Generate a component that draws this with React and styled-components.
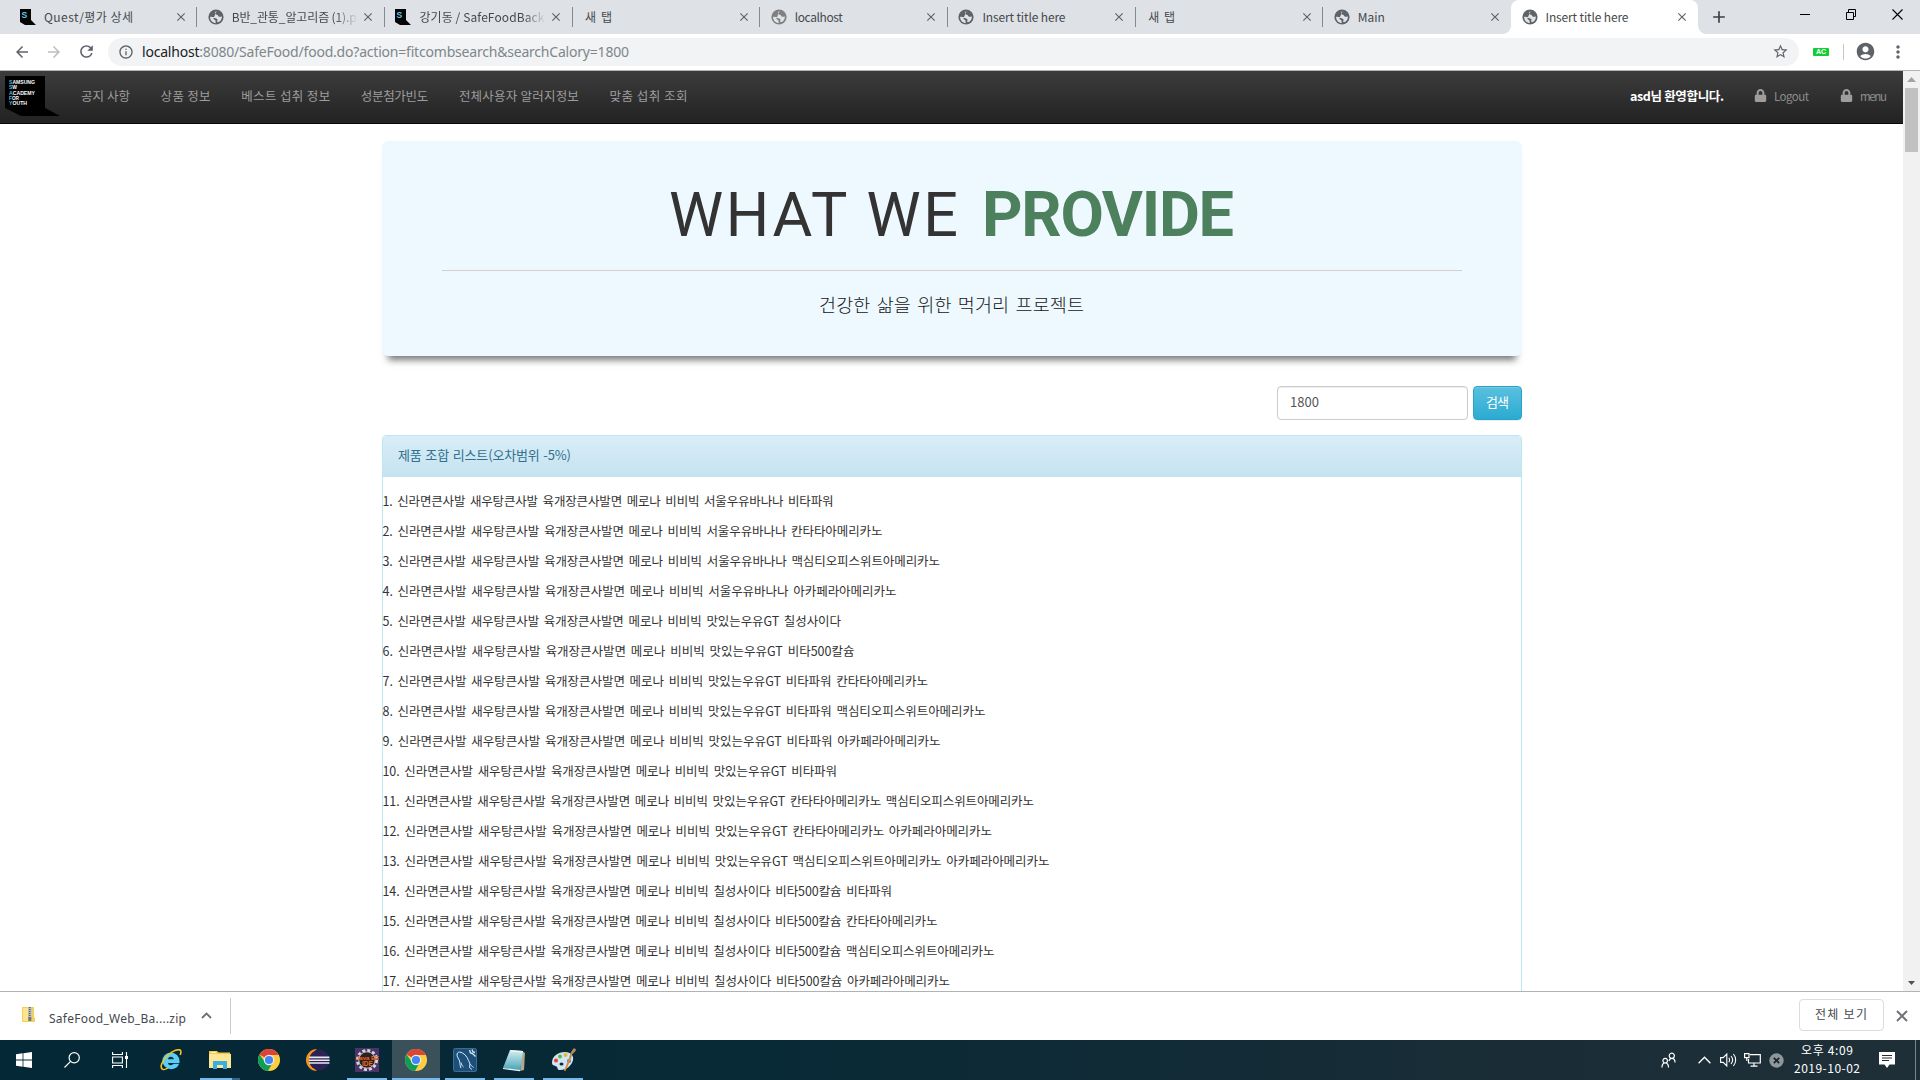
import React, { useLayoutEffect, useRef, useState } from "react";
import styled, { createGlobalStyle, css } from "styled-components";
import {
  MdArrowBack, MdArrowForward, MdRefresh, MdInfoOutline, MdStarBorder,
  MdAccountCircle, MdMoreVert, MdAdd, MdClose,
} from "react-icons/md";
import { FaLock } from "react-icons/fa";

const GlobalStyle = createGlobalStyle`
  * { box-sizing: border-box; }
  body {
    margin: 0;
    overflow: hidden;
    background: #fff;
    font-family: "Noto Sans CJK KR", sans-serif;
    color: #333;
  }
  svg { display: block; flex: none; }
`;

/* ---------- text set to a fixed measure ---------- */

const Measure = styled.span`
  display: block;
  flex: none;
  width: ${(p) => p.$w}px;
  white-space: pre;
`;

function Fit({ w, children, ...rest }) {
  const ref = useRef(null);
  const [spacing, setSpacing] = useState(0);
  useLayoutEffect(() => {
    const el = ref.current;
    const previous = el.style.letterSpacing;
    el.style.letterSpacing = "0px";
    const natural = el.getBoundingClientRect().width;
    el.style.letterSpacing = previous;
    setSpacing((w - natural) / Math.max(1, el.textContent.length - 1));
  }, [w, children]);
  return (
    <Measure $w={w} {...rest}>
      <span ref={ref} style={{ letterSpacing: `${spacing}px` }}>{children}</span>
    </Measure>
  );
}

/* ---------- window ---------- */

const Screen = styled.div`
  width: 1920px;
  height: 1080px;
  display: flex;
  flex-direction: column;
  overflow: hidden;
`;

const TabStrip = styled.div`
  flex: none;
  height: 34px;
  background: #dee1e6;
  padding-left: 9px;
  display: flex;
  align-items: center;
`;

const TabBox = styled.div`
  flex: none;
  width: 187.7px;
  height: 34px;
  padding: 0 9px 0 11px;
  display: flex;
  align-items: center;
  font-size: 12px;
  line-height: 18px;
  color: #45494d;
  position: relative;
  ${(p) => p.$active ? css`
    background: #fff;
    border-radius: 8px 8px 0 0;
    &::before, &::after {
      content: "";
      position: absolute;
      bottom: 0;
      width: 8px;
      height: 8px;
    }
    &::before { left: -8px; background: radial-gradient(circle at 0 0, #dee1e6 7.5px, #fff 8px); }
    &::after { right: -8px; background: radial-gradient(circle at 100% 0, #dee1e6 7.5px, #fff 8px); }
  ` : css`
    &::after {
      content: "";
      position: absolute;
      right: -0.5px;
      top: 7px;
      height: 20px;
      width: 1px;
      background: ${p.$last ? "transparent" : "#85888c"};
    }
  `}
`;

const TabTitle = styled.div`
  flex: 1;
  min-width: 0;
  padding-bottom: 1px;
  margin-left: ${(p) => (p.$icon ? 8 : 2)}px;
  margin-right: ${(p) => (p.$fade ? 3 : 6)}px;
  ${(p) => p.$fade && css`mask-image: linear-gradient(90deg, #000 82%, transparent);`}
`;

const NewTab = styled.div`
  margin-left: 11px;
  color: #3c4043;
`;

const WindowButtons = styled.div`
  flex: 1;
  display: flex;
  justify-content: flex-end;
  gap: 36px;
  padding: 0 17.5px 5px 0;
`;

const Toolbar = styled.div`
  flex: none;
  height: 37px;
  padding: 0 11px 1px 13px;
  display: flex;
  align-items: center;
  background: #fff;
  border-bottom: 1px solid #b0b4b3;
  color: #5f6368;
`;

const NavIcon = styled.div`
  width: 18px;
  margin-right: 14px;
  color: ${(p) => (p.$off ? "#bcbec0" : "#5f6368")};
`;

const Omnibox = styled.div`
  flex: none;
  width: 1691px;
  height: 28px;
  margin-left: -1px;
  padding: 0 10px;
  border-radius: 14px;
  background: #f1f3f4;
  display: flex;
  align-items: center;
  gap: 8px;
  font-family: "Noto Sans", sans-serif;
  font-size: 14px;
  line-height: 20px;
  color: #80868b;
`;

const Host = styled.span`color: #202124;`;
const Spring = styled.div`flex: 1;`;

const Badge = styled.div`
  width: 16px;
  height: 8px;
  margin-left: 14px;
  background: #12ce35;
  border-radius: 1px;
  color: #fff;
  font: bold 7px/8px "Liberation Sans", sans-serif;
  text-align: center;
`;

const ToolbarRule = styled.div`
  width: 1px;
  height: 16px;
  margin: 0 11px 0 14px;
  background: #c5c8cb;
`;

const MenuDots = styled.div`margin-left: 12px;`;

/* ---------- page ---------- */

const Viewport = styled.div`
  flex: none;
  height: 920px;
  display: flex;
  overflow: hidden;
`;

const Page = styled.div`
  width: 1903px;
  height: 920px;
  overflow: hidden;
`;

const Navbar = styled.nav`
  height: 53px;
  padding: 0 16px 3px 5px;
  display: flex;
  align-items: center;
  background: linear-gradient(#3c3c3c, #222);
  border-bottom: 1px solid #080808;
  color: #9d9d9d;
  font-size: 12.5px;
  line-height: 20px;
`;

const Brand = styled.div`
  margin: 1px 21px 0 0;
`;

const NavLinks = styled.div`
  display: flex;
  gap: 30.6px;
`;

const Welcome = styled.div`
  color: #fff;
  font-weight: 700;
  margin-right: 30px;
`;

const AccountLink = styled.div`
  display: flex;
  align-items: center;
  gap: 7px;
  margin-left: ${(p) => (p.$next ? 31 : 0)}px;
  font-size: 11.5px;
  color: #8d8d8d;
  svg { color: #9d9d9d; }
  span { padding-top: 1px; }
`;

const Container = styled.main`
  width: 1140px;
  margin: 17px 0 0 382px;
`;

const Jumbotron = styled.section`
  height: 215px;
  padding: 0 60px;
  border-radius: 6px;
  background: #edf9ff;
  box-shadow: 0 10px 7px -6px #777;
`;

const Headline = styled.h1`
  margin: 0;
  height: 129px;
  padding: 39px 0 0 227px;
  display: flex;
  gap: 24px;
  font: 400 61px/70px Roboto, sans-serif;
  color: #333;
`;

const Strong = styled.div`
  font-weight: 700;
  font-size: 63px;
  color: #4d805c;
`;

const Rule = styled.div`
  height: 1px;
  background: #d4d0d2;
`;

const Tagline = styled.p`
  margin: 0;
  padding: 18px 0 0 377px;
  font-size: 18.5px;
  font-weight: 300;
  line-height: 30px;
  word-spacing: 2px;
  color: #151515;
`;

const SearchRow = styled.div`
  margin: 30px 0 15px;
  display: flex;
  justify-content: flex-end;
  gap: 5px;
  font-size: 13px;
`;

const SearchField = styled.div`
  width: 191px;
  height: 34px;
  padding: 5px 12px;
  border: 1px solid #ccc;
  border-radius: 4px;
  box-shadow: inset 0 1px 1px rgba(0, 0, 0, 0.075);
  line-height: 19px;
  color: #555;
`;

const SearchButton = styled.div`
  width: 49px;
  height: 34px;
  padding: 5px 12px;
  border: 1px solid #28a4c9;
  border-radius: 4px;
  background: linear-gradient(#5bc0de, #2aabd2);
  box-shadow: inset 0 1px 0 rgba(255, 255, 255, 0.15), 0 1px 1px rgba(0, 0, 0, 0.075);
  line-height: 19px;
  color: #fff;
`;

const Panel = styled.section`
  height: 700px;
  border: 1px solid #bce8f1;
  border-radius: 4px;
`;

const PanelHeading = styled.div`
  height: 41px;
  padding: 9px 15px;
  background: linear-gradient(#d9edf7, #c4e3f0);
  border-radius: 3px 3px 0 0;
  font-size: 13px;
  line-height: 20px;
  word-spacing: 1px;
  color: #31708f;
`;

const Results = styled.div`
  padding-top: 14px;
  font-size: 12.5px;
  line-height: 20px;
  word-spacing: 2px;
`;

const ResultRow = styled.p`margin: 0 0 10px -0.5px;`;

const Scrollbar = styled.div`
  width: 17px;
  height: 920px;
  background: #f1f1f1;
  display: flex;
  flex-direction: column;
  align-items: center;
`;

const ScrollThumb = styled.div`
  width: 13px;
  height: 64px;
  margin-bottom: auto;
  background: #c1c1c1;
`;

/* ---------- downloads ---------- */

const DownloadBar = styled.div`
  flex: none;
  height: 49px;
  padding: 0 12px 0 21px;
  border-top: 1px solid #b0b3b5;
  display: flex;
  align-items: center;
  background: #fff;
  font-size: 12px;
  line-height: 18px;
  color: #45494d;
`;

const FileIcon = styled.div`margin: 0 14px 3px 0;`;
const FileName = styled.div`
  padding-top: 5px;
  font-family: "Noto Sans", sans-serif;
  font-size: 12px;
`;
const Chevron = styled.div`margin: 0 18px 1px 15px;`;
const BarRule = styled.div`
  width: 1px;
  height: 36px;
  background: #c8cacc;
`;
const ShowAll = styled.div`
  width: 85px;
  height: 32px;
  margin: 0 12px 2px auto;
  padding: 5px 15px;
  border: 1px solid #dadce0;
  border-radius: 4px;
`;

/* ---------- taskbar ---------- */

const Taskbar = styled.div`
  flex: none;
  height: 40px;
  display: flex;
  background: linear-gradient(90deg, #052836 0%, #082936 40%, #1a2d36 80%, #1f2f38 100%);
  color: #fff;
`;

const SystemGroup = styled.div`
  display: flex;
  margin-right: 3px;
`;

const AppGroup = styled.div`
  display: flex;
  gap: 1px;
`;

const TaskButton = styled.div`
  width: 48px;
  height: 40px;
  display: grid;
  place-items: center;
  background-color: ${(p) => (p.$active ? "#3a515c" : "transparent")};
  background-image: ${(p) => (p.$open ? p.$stacked
    ? "linear-gradient(90deg, #76b9ed 32px, #35658a 32px)"
    : "linear-gradient(#76b9ed, #76b9ed)" : "none")};
  background-repeat: no-repeat;
  background-position: center bottom;
  background-size: ${(p) => (p.$active ? 48 : 40)}px 2px;
`;

const Tray = styled.div`
  margin-left: auto;
  display: flex;
  align-items: center;
`;

const TrayIcon = styled.div`margin-right: ${(p) => p.$after}px;`;

const Clock = styled.div`
  width: 66px;
  margin-right: 19px;
  padding-bottom: 2px;
  display: flex;
  flex-direction: column;
  align-items: center;
  font-size: 12px;
  line-height: 18px;
`;

const DesktopEdge = styled.div`
  width: 1px;
  height: 40px;
  margin: 0 4px 0 20px;
  background: #7c8589;
`;

/* ---------- drawings ---------- */

const Globe = ({ tone = "#5f6368" }) => (
  <svg width="16" height="16" viewBox="0 0 16 16">
    <circle cx="8" cy="8" r="7.6" fill={tone} />
    <path d="M8.6 2.1C7 3 6.6 4.3 7.6 5.2c.8.6 2 .2 2.4 1.3.3 1 1.3 1.5 2.4 1.2l1.500-.3c.1 2.8-1.600 5-3.900 5.900-.9-.2-1-1-.6-1.800.5-1.200-.3-1.600-1.300-2C6.800 9 6.500 8 5 7.900L2.100 7.700C2 11.200 4.500 13.900 8 14c-.9-1-.3-1.600-.5-2.500C7.200 10.600 5.600 11 5.400 9.600" fill="#dfe2e6" stroke="none" />
  </svg>
);

const SsafyMark = () => (
  <svg width="16" height="17" viewBox="0 0 16 17">
    <path d="M0 0h11v11l5 5H5l-5-3z" fill="#050505" />
    <text x="1.600" y="8.500" fontSize="8.500" fontWeight="700" fontFamily="Liberation Sans, sans-serif" fill="#63c8e6">S</text>
  </svg>
);

const logoLines = ["SAMSUNG", "SW", "ACADEMY", "FOR", "YOUTH"];
const logoWidths = [26, 8, 26, 10, 18];

const Logo = () => (
  <svg width="55" height="40" viewBox="0 0 55 40">
    <path d="M0 0h40v32l15 8H16L0 32z" fill="#000" />
    <g fontSize="5.800" fontWeight="700" fontFamily="Liberation Sans, sans-serif" fill="#fff">
      {logoLines.map((line, i) => (
        <text key={line} x="4" y={8 + i * 5.3} textLength={logoWidths[i]} lengthAdjust="spacingAndGlyphs">
          <tspan fill="#55bddd">{line[0]}</tspan>{line.slice(1)}
        </text>
      ))}
    </g>
  </svg>
);

const Chrome = () => (
  <svg width="22" height="22" viewBox="0 0 22 22">
    <circle cx="11" cy="11" r="11" fill="#ffcd40" />
    <path d="M11 11 1.500 5.500A11 11 0 0 1 20.500 5.500L20.600 6H11z" fill="#db4437" />
    <path d="M1.500 5.500A11 11 0 0 0 10 22l4.500-8L7 13z" fill="#0f9d58" />
    <circle cx="11" cy="11" r="5.200" fill="#f1f1f1" />
    <circle cx="11" cy="11" r="4.100" fill="#4285f4" />
  </svg>
);

const Explorer = () => (
  <svg width="22" height="22" viewBox="0 0 22 22">
    <path fillRule="evenodd" d="M2.300 12a8.600 8.600 0 0 1 17.200 0v2H8c.4 2.600 4 3 5.500.8h5.500c-1 3.400-4 5.400-7.800 5.400a8.800 8.800 0 0 1-8.900-8.200zM8 10.300h5.800C13.300 7 8.500 7 8 10.300z" fill="#5ccdf5" />
    <path d="M3 20.500C-1 19 2 11.500 8 6 13 1.500 19-.5 20.500 1.500c.8 1.200.4 2.700-.3 4.500" fill="none" stroke="#f3c21c" strokeWidth="1.600" />
    <path d="M3 20.500c1.500.3 3.500-.5 5-1.500" fill="none" stroke="#f3c21c" strokeWidth="1.400" />
  </svg>
);

const Folder = () => (
  <svg width="22" height="20" viewBox="0 0 22 20">
    <path d="M0 1h8l1.500 1.500H21V18H0z" fill="#f5c84c" />
    <path d="M0 4h22v14H0z" fill="#ffe694" />
    <path d="M4 11h14v8h-4v-4H8v4H4z" fill="#37afe3" />
    <path d="M2 2h5v1H2z" fill="#fff3c8" />
  </svg>
);

const Eclipse = () => (
  <svg width="24" height="24" viewBox="0 0 24 24">
    <path d="M11 1A11 11 0 0 0 11 23 14 14 0 0 1 11 1z" fill="#f7941e" />
    <circle cx="13.300" cy="12" r="10.300" fill="#2c2255" />
    <path d="M3 8.600h20.400v1.700H3zM3 11.400h20.600v1.700H3zM3 14.200h20.400v1.500H3z" fill="#e9e9f2" />
  </svg>
);

const JavaEE = () => (
  <svg width="24" height="24" viewBox="0 0 24 24">
    <rect width="24" height="24" fill="#4b3468" />
    <circle cx="12" cy="12" r="9.500" fill="none" stroke="#d8d8d8" strokeWidth="3" strokeDasharray="3 1.970" />
    <circle cx="12" cy="12" r="8.200" fill="#2b2024" stroke="#bbb" />
    <g fontFamily="Liberation Sans, sans-serif" fontWeight="700" fill="#ee6a1f">
      <text x="1" y="11.500" fontSize="6">Java EE</text>
      <text x="7" y="18" fontSize="6.500">IDE</text>
    </g>
  </svg>
);

const MySql = () => (
  <svg width="24" height="24" viewBox="0 0 24 24">
    <rect width="24" height="24" rx="2" fill="#1d4f7b" />
    <rect x=".5" y=".5" width="23" height="23" rx="2" fill="none" stroke="#3c6d95" />
    <path d="M8 20c-1.500-3-.5-4-1.500-7S3 8 4.500 5c1-1.500 3-1 5 0 4 2 5.500 6 7.500 11 .5 1 2 2 3.500 3.500M8 14.500c.5 2 1 3.500 2.500 4.500M17 16l-.5 3.500 2.500 2" fill="none" stroke="#dce9f3" strokeWidth="1" />
    <path d="M16.500 2l1 3 2 .5 3 3M19 1.500l1 2.500 2 .5" fill="none" stroke="#dce9f3" strokeWidth="1.300" />
  </svg>
);

const Notepad = () => (
  <svg width="24" height="24" viewBox="0 0 24 24">
    <defs>
      <linearGradient id="pad" x1="0" y1="0" x2="0" y2="1">
        <stop offset="0" stopColor="#d6eff3" />
        <stop offset="1" stopColor="#43a1b3" />
      </linearGradient>
    </defs>
    <path d="M20 3l3 2-1 17-4 1z" fill="#b3a78d" />
    <path d="M8 2l13 1-3 20L1 20z" fill="url(#pad)" />
    <path d="M8 2l13 1v1.500L8 3.500z" fill="#f1f1f1" />
    <path d="M1 20l17 2v1.300L1 21z" fill="#e8f4f5" />
  </svg>
);

const Paint = () => (
  <svg width="26" height="26" viewBox="0 0 26 26">
    <path d="M2 16C2 9 8 5 15 5c6 0 9 4 8 8-1 5-6 10-13 10-3 0-2-2-3-3-1-1.500-5-1-5-4z" fill="#cfe6f4" />
    <circle cx="6" cy="13.500" r="2" fill="#e8412f" />
    <circle cx="10" cy="9.500" r="2" fill="#5fb548" />
    <circle cx="15.500" cy="8" r="2" fill="#efb42d" />
    <circle cx="19" cy="14" r="2" fill="#3d7fd0" />
    <ellipse cx="11.500" cy="17" rx="2" ry="1.500" fill="#0d2b3a" />
    <path d="M14 24l5-13 2 1-5.500 12z" fill="#e08a33" />
    <path d="M19 11l1.500-5 3-4.500c2-.5 3 1 2 2.500L22 7.500 21 12z" fill="#b98a5a" />
  </svg>
);

const Windows = () => (
  <svg width="16" height="16" viewBox="0 0 16 16" fill="#fff">
    <path d="M0 2.200 6.600 1.300v6.300H0zM7.400 1.200 16 0v7.600H7.400zM0 8.400h6.600v6.300L0 13.800zM7.400 8.400H16V16l-8.600-1.200z" />
  </svg>
);

const Search = () => (
  <svg width="16" height="16" viewBox="0 0 16 16" fill="none" stroke="#fff" strokeWidth="1.200">
    <circle cx="10.200" cy="5.800" r="5.100" />
    <path d="M6.600 9.400.5 15.500" />
  </svg>
);

const TaskView = () => (
  <svg width="16" height="16" viewBox="0 0 16 16" fill="none" stroke="#fff" strokeWidth="1.100">
    <path d="M.6 0v2.500h9.800V0M.6 16v-2.500h9.800V16M.6 5h9.800v6H.6zM14.500 0v16" />
    <path d="M13 4h3v3h-3z" fill="#fff" stroke="none" />
  </svg>
);

const ZipFile = () => (
  <svg width="14" height="17" viewBox="0 0 14 17">
    <path d="M1 1h12v10l1 1v4H1z" fill="#f3cf5f" />
    <path d="M2 2h5v13H2z" fill="#fde58f" />
    <path d="M7 1h3.500v12H7z" fill="#b9bcc0" />
    <path d="M8.700 1v12" stroke="#55595d" strokeWidth="1.500" strokeDasharray="1 1" />
    <rect x="7.300" y="11" width="3" height="4" fill="#777" />
  </svg>
);

const Line = ({ w, h, d, stroke = "#fff", sw = 1.2, fill = "none" }) => (
  <svg width={w} height={h} viewBox={`0 0 ${w} ${h}`} fill={fill} stroke={stroke} strokeWidth={sw}>
    <path d={d} />
  </svg>
);

/* ---------- data ---------- */

const tabs = [
  { icon: "ssafy", title: "Quest/평가 상세", w: 89 },
  { icon: "globe", title: "B반_관통_알고리즘 (1).p", w: 125, fade: true },
  { icon: "ssafy", title: "강기동 / SafeFoodBack", w: 125, fade: true },
  { title: "새 탭", w: 27 },
  { icon: "globe", tone: "#808080", title: "localhost", w: 48 },
  { icon: "globe", title: "Insert title here", w: 83 },
  { title: "새 탭", w: 27 },
  { icon: "globe", title: "Main", w: 27, last: true },
  { icon: "globe", title: "Insert title here", w: 83, active: true },
];

const navItems = [
  ["공지 사항", 49], ["상품 정보", 50], ["베스트 섭취 정보", 89],
  ["성분첨가빈도", 67.5], ["전체사용자 알러지정보", 120], ["맞춤 섭취 조회", 78],
];

const base = "신라면큰사발 새우탕큰사발 육개장큰사발면 메로나 비비빅";
const results = [
  ["서울우유바나나 비타파워", 451],
  ["서울우유바나나 칸타타아메리카노", 500],
  ["서울우유바나나 맥심티오피스위트아메리카노", 557.5],
  ["서울우유바나나 아카페라아메리카노", 514],
  ["맛있는우유GT 칠성사이다", 458.5],
  ["맛있는우유GT 비타500칼슘", 472],
  ["맛있는우유GT 비타파워 칸타타아메리카노", 545.5],
  ["맛있는우유GT 비타파워 맥심티오피스위트아메리카노", 603],
  ["맛있는우유GT 비타파워 아카페라아메리카노", 558],
  ["맛있는우유GT 비타파워", 454.5],
  ["맛있는우유GT 칸타타아메리카노 맥심티오피스위트아메리카노", 651.5],
  ["맛있는우유GT 칸타타아메리카노 아카페라아메리카노", 609.5],
  ["맛있는우유GT 맥심티오피스위트아메리카노 아카페라아메리카노", 667],
  ["칠성사이다 비타500칼슘 비타파워", 509.5],
  ["칠성사이다 비타500칼슘 칸타타아메리카노", 555],
  ["칠성사이다 비타500칼슘 맥심티오피스위트아메리카노", 612],
  ["칠성사이다 비타500칼슘 아카페라아메리카노", 567.5],
];

const apps = [
  { Icon: Explorer }, { Icon: Folder, open: true, stacked: true }, { Icon: Chrome },
  { Icon: Eclipse }, { Icon: JavaEE, open: true }, { Icon: Chrome, open: true, active: true },
  { Icon: MySql, open: true }, { Icon: Notepad, open: true }, { Icon: Paint, open: true },
];

function Tab({ icon, tone, title, w, fade, last, active }) {
  return (
    <TabBox $active={active} $last={last}>
      {icon === "ssafy" && <SsafyMark />}
      {icon === "globe" && <Globe tone={tone} />}
      <TabTitle $icon={!!icon} $fade={fade}><Fit w={w}>{title}</Fit></TabTitle>
      <MdClose size={14} color="#5f6368" />
    </TabBox>
  );
}

export default function App() {
  return (
    <Screen>
      <GlobalStyle />
      <TabStrip>
        {tabs.map((t, i) => <Tab key={i} {...t} />)}
        <NewTab><MdAdd size={20} /></NewTab>
        <WindowButtons>
          <Line w={10} h={11} d="M0 5.500h10" stroke="#000" sw={1} />
          <Line w={10} h={11} d="M.5 3.500h7v7h-7zM2.500 3.500v-3h7v7h-2" stroke="#000" sw={1} />
          <Line w={11} h={11} d="M.5.5l10 10M10.500.5l-10 10" stroke="#000" sw={1.1} />
        </WindowButtons>
      </TabStrip>
      <Toolbar>
        <NavIcon><MdArrowBack size={18} /></NavIcon>
        <NavIcon $off><MdArrowForward size={18} /></NavIcon>
        <NavIcon><MdRefresh size={19} /></NavIcon>
        <Omnibox>
          <MdInfoOutline size={16} color="#5f6368" />
          <Fit w={487}><Host>localhost</Host>:8080/SafeFood/food.do?action=fitcombsearch&amp;searchCalory=1800</Fit>
          <Spring />
          <MdStarBorder size={17} color="#5f6368" />
        </Omnibox>
        <Badge>AC</Badge>
        <ToolbarRule />
        <MdAccountCircle size={21} />
        <MenuDots><MdMoreVert size={20} /></MenuDots>
      </Toolbar>

      <Viewport>
        <Page>
          <Navbar>
            <Brand><Logo /></Brand>
            <NavLinks>
              {navItems.map(([label, w]) => <Fit key={label} w={w}>{label}</Fit>)}
            </NavLinks>
            <Spring />
            <Welcome><Fit w={94}>asd님 환영합니다.</Fit></Welcome>
            <AccountLink><FaLock size={13} /><Fit w={35}>Logout</Fit></AccountLink>
            <AccountLink $next><FaLock size={13} /><Fit w={27}>menu</Fit></AccountLink>
          </Navbar>
          <Container>
            <Jumbotron>
              <Headline>
                <Fit w={289}>WHAT WE</Fit>
                <Strong><Fit w={252}>PROVIDE</Fit></Strong>
              </Headline>
              <Rule />
              <Tagline><Fit w={265}>건강한 삶을 위한 먹거리 프로젝트</Fit></Tagline>
            </Jumbotron>
            <SearchRow>
              <SearchField><Fit w={29}>1800</Fit></SearchField>
              <SearchButton><Fit w={23}>검색</Fit></SearchButton>
            </SearchRow>
            <Panel>
              <PanelHeading><Fit w={173}>제품 조합 리스트(오차범위 -5%)</Fit></PanelHeading>
              <Results>
                {results.map(([items, w], i) => (
                  <ResultRow key={items}><Fit w={w}>{`${i + 1}. ${base} ${items}`}</Fit></ResultRow>
                ))}
              </Results>
            </Panel>
          </Container>
        </Page>
        <Scrollbar>
          <Line w={9} h={17} d="M0 11l4.500-5L9 11z" fill="#a3a3a3" stroke="none" />
          <ScrollThumb />
          <Line w={9} h={17} d="M1 7h7l-3.500 4z" fill="#505050" stroke="none" />
        </Scrollbar>
      </Viewport>

      <DownloadBar>
        <FileIcon><ZipFile /></FileIcon>
        <FileName><Fit w={137}>SafeFood_Web_Ba....zip</Fit></FileName>
        <Chevron><Line w={11} h={7} d="M1 6l4.500-4.500L10 6" stroke="#6b6f73" sw={1.8} /></Chevron>
        <BarRule />
        <ShowAll><Fit w={52}>전체 보기</Fit></ShowAll>
        <Line w={12} h={12} d="M1 1l10 10M11 1L1 11" stroke="#6f7377" sw={2} />
      </DownloadBar>

      <Taskbar>
        <SystemGroup>
          <TaskButton><Windows /></TaskButton>
          <TaskButton><Search /></TaskButton>
          <TaskButton><TaskView /></TaskButton>
        </SystemGroup>
        <AppGroup>
          {apps.map(({ Icon, open, active, stacked }, i) => (
            <TaskButton key={i} $open={open} $active={active} $stacked={stacked}><Icon /></TaskButton>
          ))}
        </AppGroup>
        <Tray>
          <TrayIcon $after={22}>
            <Line w={15} h={16} sw={1.2} d="M1 15.500c0-3 1.200-4.500 3.200-4.500s3.300 1.500 3.300 4.500M4.200 11a2.300 2.300 0 1 1 .01 0M8 9c.5-1.700 1.400-2.600 2.800-2.600 2 0 3.200 1.500 3.200 4M10.800 6.400a2.600 2.600 0 1 1 .01 0" />
          </TrayIcon>
          <TrayIcon $after={9}><Line w={13} h={8} d="M.6 7.200 6.500 1.200l5.900 6" sw={1.3} /></TrayIcon>
          <TrayIcon $after={7}>
            <Line w={17} h={14} sw={1.1} d="M.6 4.600h2.600l3.600-3.600v12L3.200 9.400H.6zM8.800 4.800c1 1.400 1 3 0 4.400M11 3c2 2.400 2 5.600 0 8M13.400 1c3 3.500 3 8.500 0 12" />
          </TrayIcon>
          <TrayIcon $after={8}>
            <Line w={17} h={14} sw={1.2} d="M6 1.600h10.300v8.400H4.500V6M10 10v3M6.500 13.200h7M.6.600h4.400v4H.6zM2.800 4.600V8" />
          </TrayIcon>
          <TrayIcon $after={10}>
            <svg width="15" height="15" viewBox="0 0 15 15">
              <circle cx="7.500" cy="7.500" r="7.200" fill="#8f979b" />
              <path d="M4.800 4.800l5.400 5.400M10.200 4.800l-5.400 5.400" stroke="#17262e" strokeWidth="1.800" />
            </svg>
          </TrayIcon>
          <Clock>
            <Fit w={52}>오후 4:09</Fit>
            <Fit w={66}>2019-10-02</Fit>
          </Clock>
          <svg width="16" height="16" viewBox="0 0 16 16">
            <path d="M0 0h16v12.500h-5.500L8 16l-2.500-3.500H0z" fill="#fff" />
            <path d="M3 3.500h10M3 6h10M3 8.500h7" stroke="#1c2d36" strokeWidth="1" />
          </svg>
          <DesktopEdge />
        </Tray>
      </Taskbar>
    </Screen>
  );
}
